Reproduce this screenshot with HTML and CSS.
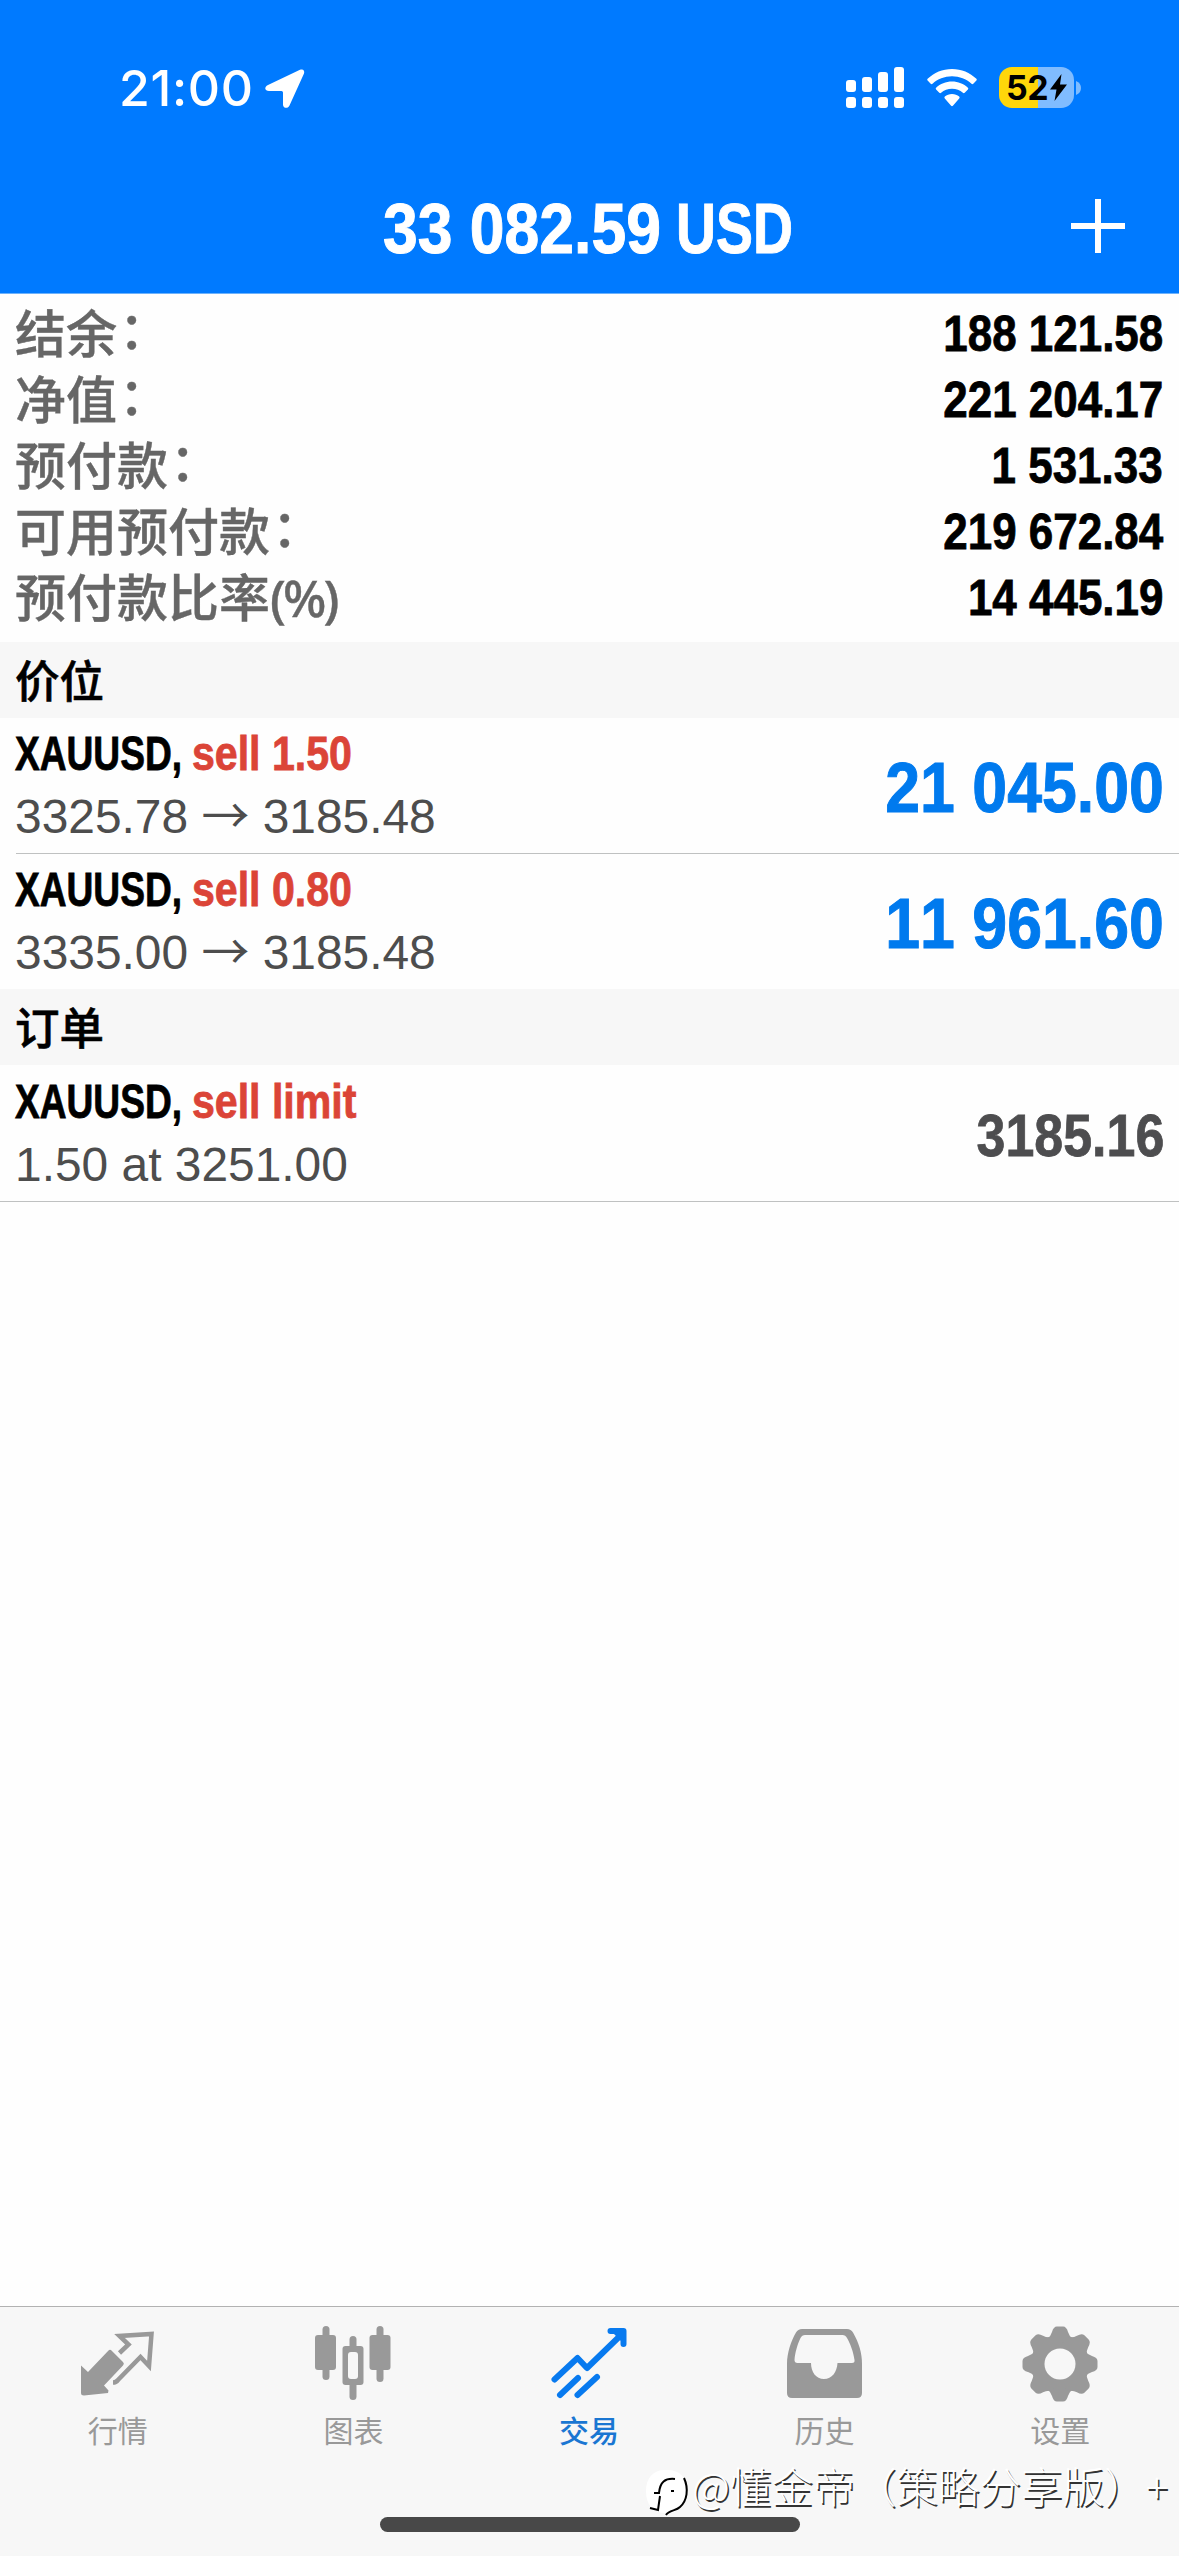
FILE: index.html
```html
<!DOCTYPE html>
<html lang="zh-CN">
<head>
<meta charset="utf-8">
<title>交易</title>
<link rel="stylesheet" href="styles.css">
</head>
<body>
<div class="app">
  <header class="header">
    <div class="status">
      <div class="status-left">
        <span class="clock">21:00</span>
        <svg class="ico-location" width="40" height="40" viewBox="0 0 40 40"><path d="M3 16 35 .8C38-.5 40 1.500 39 4.500L24.500 36.500C23 40 18 39.500 18 35.500V23.500Q18 22 16.500 22H4C-.5 22-1 17.800 3 16Z" fill="#fff"/></svg>
      </div>
      <div class="status-right">
        <svg width="58" height="41" viewBox="0 0 58 41" fill="#fff"><rect x="0" y="13" width="10" height="12" rx="3"/><rect x="16" y="10" width="10" height="15" rx="3"/><rect x="32" y="5" width="10" height="20" rx="3"/><rect x="48" y="0" width="10" height="25" rx="3"/><rect x="0" y="30" width="10" height="11" rx="3"/><rect x="16" y="30" width="10" height="11" rx="3"/><rect x="32" y="30" width="10" height="11" rx="3"/><rect x="48" y="30" width="10" height="11" rx="3"/></svg>
        <svg class="ico-wifi" width="50" height="38" viewBox="0 0 50 38" fill="#fff"><path d="M25 0C34.500 0 43 3.700 49.400 9.800q.9.900 0 1.800l-3.100 3.100q-.9.900-1.800 0C39.400 10 32.500 7.200 25 7.200S10.600 10 5.500 14.700q-.9.900-1.800 0L.6 11.600q-.9-.9 0-1.800C7 3.700 15.500 0 25 0Z"/><path d="M25 12.600c6.200 0 11.700 2.300 15.900 6.200q.9.900 0 1.800l-3.200 3.200q-.9.800-1.800 0c-2.900-2.600-6.700-4.100-10.900-4.100s-8 1.500-10.900 4.100q-.9.800-1.800 0l-3.200-3.200q-.9-.9 0-1.800c4.200-3.900 9.700-6.200 15.900-6.200Z"/><path d="M25 25c2.800 0 5.300 1 7.200 2.600q.9.900 0 1.800l-6.300 7.300q-.9.900-1.800 0l-6.300-7.300q-.9-.9 0-1.800C19.700 26 22.200 25 25 25Z"/></svg>
        <div class="battery">
          <span class="battery-level">52</span>
          <svg width="17" height="27" viewBox="0 0 17 27"><path d="M11.500 0 0 15.500h6.500L4.500 27 17 10.500H10Z" fill="#000"/></svg>
        </div>
        <svg class="battery-cap" width="5" height="14" viewBox="0 0 5 14"><path d="M0 0Q5 2 5 7T0 14Z" fill="#7fbcff"/></svg>
      </div>
    </div>
    <div class="titlebar">
      <h1 class="title"><span class="title-sum">33 082.59</span><span class="title-cur">USD</span></h1>
      <svg class="plus" width="54" height="54" viewBox="0 0 54 54"><path d="M27 0V54M0 27H54" stroke="#fff" stroke-width="6"/></svg>
    </div>
  </header>

  <main class="content">
    <dl class="summary">
      <div class="line"><dt>结余<span class="colon">：</span></dt><dd>188 121.58</dd></div>
      <div class="line"><dt>净值<span class="colon">：</span></dt><dd>221 204.17</dd></div>
      <div class="line"><dt>预付款<span class="colon">：</span></dt><dd>1 531.33</dd></div>
      <div class="line"><dt>可用预付款<span class="colon">：</span></dt><dd>219 672.84</dd></div>
      <div class="line"><dt>预付款比率<span class="unit">(%)</span></dt><dd>14 445.19</dd></div>
    </dl>
    <h2 class="section">价位</h2>
    <div class="row divided">
      <div class="deal">
        <div class="deal-head"><span class="symbol">XAUUSD,</span><span class="side">sell 1.50</span></div>
        <div class="deal-price">3325.78 <span class="arrow">→</span> 3185.48</div>
      </div>
      <div class="profit">21 045.00</div>
    </div>
    <div class="row">
      <div class="deal">
        <div class="deal-head"><span class="symbol">XAUUSD,</span><span class="side">sell 0.80</span></div>
        <div class="deal-price">3335.00 <span class="arrow">→</span> 3185.48</div>
      </div>
      <div class="profit">11 961.60</div>
    </div>
    <h2 class="section">订单</h2>
    <div class="row last">
      <div class="deal">
        <div class="deal-head"><span class="symbol">XAUUSD,</span><span class="side">sell limit</span></div>
        <div class="deal-price">1.50 at 3251.00</div>
      </div>
      <div class="quote">3185.16</div>
    </div>
  </main>

  <nav class="tabs">
    <a class="tab"><svg width="76" height="76" viewBox="0 0 76 76"><path d="M1 39.500 8 46 28.500 24.500q1.500-1.500 3 0L43 36q1.800 1.800 0 3.500L24 59.500l4.500 5L28 67 4 69.500Q1 69.500 1 67Z" fill="#999"/><path d="M39.500 27 48.500 18.500 39.500 10 71.500 8 69 40 60.500 31 38 54Q36 56.500 33 56.500" fill="none" stroke="#999" stroke-width="4.500"/></svg><span>行情</span></a>
    <a class="tab"><svg width="76" height="76" viewBox="0 0 76 76" fill="#999"><rect x="7.500" y="0" width="7" height="54" rx="3.500"/><rect x="0" y="9" width="21" height="35" rx="3"/><rect x="61.500" y="0" width="7" height="56" rx="3.500"/><rect x="54.500" y="9" width="21" height="35" rx="3"/><rect x="34.500" y="10" width="7" height="64" rx="3.500"/><rect x="27.500" y="20" width="21" height="39" rx="3"/><rect x="33" y="26" width="10" height="27" rx="3" fill="#f7f7f7"/></svg><span>图表</span></a>
    <a class="tab active"><svg width="76" height="76" viewBox="0 0 76 76" fill="none" stroke="#087aef" stroke-width="6" stroke-linecap="round" stroke-linejoin="round"><path d="M3.500 53.500 26.500 32 36 42 70 9"/><path d="M60 5H73V18Z" fill="#087aef" stroke="none"/><path d="M59.500 5H72.500V18"/><path d="M9 69 27 52M26.500 69 46 51"/></svg><span>交易</span></a>
    <a class="tab"><svg width="76" height="76" viewBox="0 0 76 76"><path fill-rule="evenodd" fill="#999" d="M15 3H60Q64 3 66 6.500C72 17 75 27 75 38V67q0 5-5 5H5q-5 0-5-5V38C0 27 4 15 9 6.500Q11 3 15 3ZM18 9q-3 0-4.500 3C10.500 18 8 27 7.500 34q0 3 3 3H24C24 46 29 53 37 53S50 46 50.500 37H65q3 0 2.500-3C66.500 26 63 17 60 12q-1.500-3-4.500-3Z"/></svg><span>历史</span></a>
    <a class="tab"><svg width="76" height="76" viewBox="-38 -38 76 76" fill="#999"><circle r="29"/><path id="cogs" d="M-13-25Q-9-28-8-32-6.500-37.500-3-37.500H3Q6.500-37.500 8-32 9-28 13-25V25Q9 28 8 32 6.500 37.500 3 37.500H-3Q-6.500 37.500-8 32-9 28-13 25Z"/><use href="#cogs" transform="rotate(45)"/><use href="#cogs" transform="rotate(90)"/><use href="#cogs" transform="rotate(135)"/><circle r="15.500" fill="#f7f7f7"/></svg><span>设置</span></a>
    <div class="home-indicator"></div>
    <div class="watermark">
      <svg width="47" height="50" viewBox="0 0 47 50"><path d="M20 1C34 0 42 8 42 21 42 34 37 42 23 45L22 48 21 44C8 44 1 36 1 22 1 9 8 1 20 1Z" fill="#fff"/><path d="M9 24H14C15 13 20 9 30 10M15 27 13 41 5 39M26 22H29" fill="none" stroke="#000" stroke-width="2"/><path d="M39 9C44 20 42 32 35 38 31 42 24 41 21 46" fill="none" stroke="#000" stroke-width="2"/></svg>
      <span>@懂金帝（策略分享版）+</span>
    </div>
  </nav>
</div>
</body>
</html>
```
FILE: styles.css
```css
* { box-sizing: border-box; }
body { margin: 0; background: #fefefe; font-family: "Liberation Sans", "Noto Sans CJK SC", sans-serif; }
.app { width: 1179px; height: 2556px; display: flex; flex-direction: column; overflow: hidden; }
svg { display: block; overflow: visible; flex: none; }

.header { height: 294px; background: #007aff; color: #fff; border-bottom: 1px solid #6db2fb; }
.status { height: 162px; padding: 67px 98px 0 119px; display: flex; justify-content: space-between; align-items: flex-start; }
.status-left, .status-right { display: flex; align-items: flex-start; height: 41px; }
.clock { font: 500 50px/42px Inter, sans-serif; width: 146px; letter-spacing: .7px; }
.ico-location { margin-top: 2px; }
.ico-wifi { margin: 2px 22px 0 23px; }
.battery { width: 75px; height: 41px; border-radius: 13px; background: linear-gradient(90deg, #ffd60a 39px, #80bcff 39px); display: flex; align-items: center; padding-left: 7px; gap: 2px; }
.battery-level { font: 700 34px/41px Inter, sans-serif; color: #000; width: 42px; letter-spacing: -.5px; }
.battery-cap { margin: 14px 0 0 2px; }
.titlebar { height: 131px; display: grid; grid-template-columns: 1fr auto 1fr; padding: 0 54px; align-items: start; }
.title { grid-column: 2; margin: 27px 4px 0 0; display: flex; font-size: 71px; line-height: 80px; white-space: pre; width: 409px; -webkit-text-stroke: 1px; }
.title-sum { width: 293px; transform: scaleX(.88); transform-origin: 0 0; }
.title-cur { transform: scaleX(.78); transform-origin: 0 0; width: 116px; }
.plus { grid-column: 3; justify-self: end; margin-top: 37px; }

.content { flex: 1; }
.summary { margin: 0; height: 348px; padding: 7px 16px 0 15px; }
.line { display: flex; justify-content: space-between; align-items: flex-start; height: 66px; }
.line dt { font: 500 51px/60px "Noto Sans CJK SC", sans-serif; color: #666; -webkit-text-stroke: .4px; }
.colon { display: inline-block; transform: translate(2px, -4px); }
.unit { font: 500 51px/60px "Noto Sans", sans-serif; letter-spacing: -3px; }
.line dd { margin: 0; font-weight: 700; font-size: 50px; line-height: 66px; transform: scaleX(.879); transform-origin: 100% 0; color: #000; -webkit-text-stroke: .8px; }
.section { margin: 0; height: 76px; background: #f7f7f7; padding-left: 15px; font: 500 44.500px/73px "Noto Sans CJK SC", sans-serif; color: #000; -webkit-text-stroke: .6px; }
.row { display: flex; justify-content: space-between; align-items: center; height: 135.500px; margin-left: 16px; padding-right: 15px; }
.row.divided { border-bottom: 1px solid #bfc1c1; }
.row.last { margin-left: 0; padding-left: 16px; height: 137px; border-bottom: 1px solid #bfc1c1; }
.deal { display: flex; flex-direction: column; margin: -1px 0 0 -1px; }
.deal-head { display: flex; font-weight: 700; font-size: 48px; line-height: 63px; white-space: pre; -webkit-text-stroke: .8px; }
.symbol { width: 177px; transform: scaleX(.773); transform-origin: 0 0; color: #000; }
.side { transform: scaleX(.856); transform-origin: 0 0; color: #db4437; }
.deal-price { font-size: 47.900px; line-height: 63px; height: 63px; color: #4d4d4d; white-space: pre; }
.arrow { font-family: "Noto Sans CJK SC", sans-serif; line-height: 1; }
.profit { margin-top: 6px; font-weight: 700; font-size: 71px; line-height: 80px; color: #007aee; transform: scaleX(.882); transform-origin: 100% 0; -webkit-text-stroke: 1px; font-kerning: none; }
.quote { margin-top: 6px; font-weight: 700; font-size: 59px; color: #4d4d4f; transform: scaleX(.88); transform-origin: 100% 0; -webkit-text-stroke: .8px; }

.tabs { position: relative; height: 250px; border-top: 1px solid #b2b2b2; background: #f7f7f7; display: grid; grid-template-columns: repeat(5, 1fr); align-items: start; padding-right: 1px; }
.tab { padding-top: 19px; display: flex; flex-direction: column; align-items: center; color: #999; font: 400 30px/40px "Noto Sans CJK SC", sans-serif; }
.tab span { margin-top: 7px; }
.tab.active { color: #1a76d2; font-weight: 500; }
.home-indicator { position: absolute; left: 380px; top: 210px; width: 420px; height: 15px; border-radius: 8px; background: #484848; }
.watermark { position: absolute; left: 645px; top: 162px; display: flex; color: #fff; font: 300 41.600px/44px "Noto Sans CJK SC", sans-serif; white-space: nowrap; text-shadow: 1.500px 1.500px 0 #333; }
.watermark span { margin-top: -6px; }
```
